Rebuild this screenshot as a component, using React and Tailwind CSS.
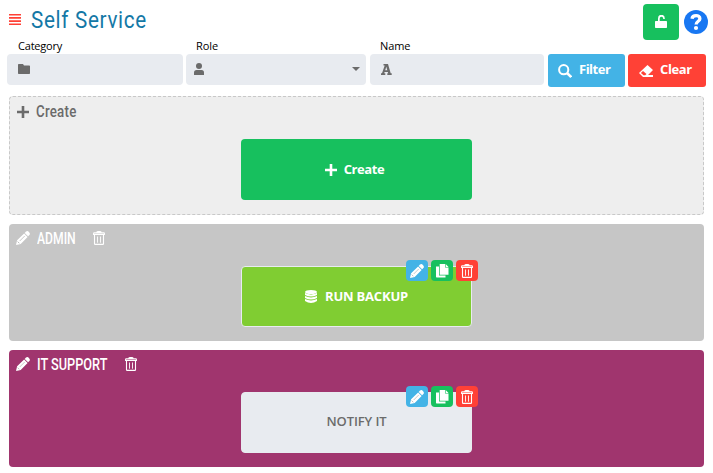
import React from 'react';

function Pencil({ className }) {
  return (
    <svg viewBox="0 0 14 14" className={className}>
      <path fill="currentColor" d="M10 .6Q11.500-.6 12.900 .9 14.600 2.500 13.400 4L12.100 5.300 8.700 1.900ZM8.100 2.400 11.600 5.900 4.700 12.900 0 14 1.100 9.300Z" />
      <path d="M3.700 10 8.800 4.900" fill="none" stroke="#000" strokeOpacity=".28" strokeWidth=".8" />
      <path d="M1.700 10.600 3.400 12.300" fill="none" stroke="#000" strokeOpacity=".3" strokeWidth=".9" />
    </svg>
  );
}

function Trash({ className }) {
  return (
    <svg viewBox="0 0 12 14" className={className} fill="none" stroke="currentColor">
      <path strokeWidth="1.100" d="M.600 3.500V2.500Q.600 1.900 1.200 1.900H10.800Q11.400 1.900 11.400 2.500V3.500ZM3.800 1.800Q3.800.6 4.800.6H7.200Q8.200.6 8.200 1.800M1.500 3.500V12.700Q1.500 13.400 2.200 13.400H9.800Q10.500 13.400 10.500 12.700V3.500" />
      <path strokeWidth=".9" d="M4.500 5.500V11.700M7.500 5.500V11.700" />
    </svg>
  );
}

function Copy({ className }) {
  return (
    <svg viewBox="0 0 13 14" className={className} fill="currentColor">
      <path d="M3.700 0H9.100V3.500H12.500V10.800H3.700ZM9.700 0 12.500 2.900H9.700ZM0 2.500H3V11.500H9.500V13.500H.5L0 13Z" />
    </svg>
  );
}

function Plus({ className }) {
  return (
    <svg viewBox="0 0 12 12" className={className} fill="currentColor">
      <path d="M4.700 0H7.300V4.700H12V7.300H7.300V12H4.700V7.300H0V4.700H4.700Z" />
    </svg>
  );
}

function Actions() {
  return (
    <div className="absolute -top-[7px] -right-[7px] flex gap-[3px] text-white">
      <button className="flex h-[21px] w-[22px] items-center justify-center rounded-[4px] bg-[#43b3e6]"><Pencil className="h-[14px] w-[14px]" /></button>
      <button className="flex h-[21px] w-[22px] items-center justify-center rounded-[4px] bg-[#17c05e]"><Copy className="h-[14px] w-[13px]" /></button>
      <button className="flex h-[21px] w-[22px] items-center justify-center rounded-[4px] bg-[#ff4136]"><Trash className="h-[14px] w-[12px]" /></button>
    </div>
  );
}

function GroupTitle({ children, width, scale }) {
  return (
    <div className="flex h-[28px] items-center pl-[7px] text-white">
      <Pencil className="h-[14px] w-[14px]" />
      <div className={`ml-[7px] ${width}`}>
        <span className={`inline-block origin-left whitespace-nowrap font-['Roboto',sans-serif] text-[16px] font-medium leading-[20px] ${scale}`}>{children}</span>
      </div>
      <Trash className="ml-[18px] h-[14px] w-[12px]" />
    </div>
  );
}

export default function App() {
  return (
    <main className="h-[473px] w-[713px] overflow-hidden bg-white font-['Open_Sans','Noto_Sans',sans-serif]">
      <header className="flex h-[40px] items-start">
        <svg viewBox="0 0 12 11" className="ml-[9px] mt-[14px] h-[11px] w-[12px] shrink-0" fill="#ff4136">
          <path d="M0 0H12V1.500H0ZM0 3.100H12V4.700H0ZM0 6.300H12V7.900H0ZM0 9.500H12V11H0Z" />
        </svg>
        <h1 className="ml-[10px] mt-[5px] w-[120px] origin-left scale-x-[0.86] whitespace-nowrap font-['Roboto',sans-serif] text-[24px] leading-[30px] tracking-[0.8px] text-[#1478a6]">Self Service</h1>
        <button className="ml-auto mt-1 flex h-9 w-9 items-center justify-center rounded-[4px] bg-[#17c05e]">
          <svg viewBox="0 0 12 13" className="mb-px h-[13px] w-[12px]" fill="#fff">
            <path fillRule="evenodd" d="M.7 6H3V3.500A3 3.300 0 0 1 9.800 3.500V4H8.200V3.500A1.700 1.700 0 0 0 4.700 3.500V6H11.300A.7.7 0 0 1 12 6.700V12.300A.7.7 0 0 1 11.300 13H.7A.7.7 0 0 1 0 12.300V6.700A.7.7 0 0 1 .7 6Z" />
          </svg>
        </button>
        <svg viewBox="0 0 24 24" className="ml-[5px] mr-[5px] mt-[10px] h-6 w-6">
          <circle cx="12" cy="12" r="12" fill="#1877f2" />
          <path d="M8 8.700C8.500 4.700 15.900 4.700 15.900 8.700C15.900 11.300 12.100 11.200 12.100 14.600" fill="none" stroke="#fff" strokeWidth="3.300" />
          <circle cx="12" cy="18" r="2.100" fill="#fff" />
        </svg>
      </header>

      <section className="flex pl-[7px] text-[11px] leading-[14px] text-black">
        <div className="w-[176px]">
          <label className="block h-[14px] pl-[11px] leading-[12px] tracking-[-0.2px]">Category</label>
          <div className="flex h-[31px] items-center rounded-[4px] bg-[#e8ebf0] pl-[11px]">
            <svg viewBox="0 0 12 10" className="mb-px h-[10px] w-[12px]" fill="#6b6b6b"><path d="M0 .7Q0 0 .7 0H5L6 1.500H11.300Q12 1.500 12 2.200V9.300Q12 10 11.300 10H.7Q0 10 0 9.300Z" /></svg>
          </div>
        </div>
        <div className="ml-[3px] w-[180px]">
          <label className="block h-[14px] pl-[10px] leading-[12px] tracking-[-0.1px]">Role</label>
          <div className="flex h-[31px] items-center justify-between rounded-[4px] bg-[#e8ebf0] pl-[8px] pr-[6px]">
            <svg viewBox="0 0 10 12" className="mb-px h-[12px] w-[10px]" fill="#6b6b6b"><circle cx="5" cy="3" r="3" /><path d="M0 12V9.500Q0 7 2.500 7H7.500Q10 7 10 9.500V12Z" /></svg>
            <svg viewBox="0 0 8 4" className="mb-px h-1 w-2" fill="#6b6b6b"><path d="M0 0H8L4 4Z" /></svg>
          </div>
        </div>
        <div className="ml-[4px] w-[174px]">
          <label className="block h-[14px] pl-[10px] leading-[12px] tracking-[-0.1px]">Name</label>
          <div className="flex h-[31px] items-center rounded-[4px] bg-[#e8ebf0] pl-[11px]">
            <svg viewBox="0 0 11 11" className="mb-px h-[11px] w-[11px]" fill="#6b6b6b"><path fillRule="evenodd" d="M2.500 0H7L9.700 9.200H10.700V11H6.300V9.200H7.200L6.800 7.900H3.600L3.200 9.200H4.300V11H0V9.200H1L3.700 1.600H2.500ZM5.300 2.700 4.200 6.200H6.300Z" /></svg>
          </div>
        </div>
        <button className="ml-[4px] mt-[14px] flex h-[33px] w-[77px] items-center rounded-[3px] bg-[#43b3e6] pl-[10px] text-[13px] font-bold text-white">
          <svg viewBox="0 0 14 14" className="h-[14px] w-[14px]" fill="none" stroke="#fff" strokeWidth="2"><circle cx="5.700" cy="5.700" r="4.600" /><path strokeWidth="2.500" d="m9 9 4.200 4" /></svg>
          <span className="ml-[7px] mb-[3px] tracking-[-0.5px]">Filter</span>
        </button>
        <button className="ml-[3px] mt-[14px] flex h-[33px] w-[78px] items-center rounded-[3px] bg-[#ff4136] pl-[11px] text-[13px] font-bold text-white">
          <svg viewBox="0 0 14 12" className="h-[12px] w-[14px]" fill="#fff"><path fillRule="evenodd" d="M8.500 0 14 5 9 10H14V12H4L0 8ZM4 6 1.900 8.100 4.500 10.300H6.200L7.500 9Z" /></svg>
          <span className="ml-[7px] mb-[3px] tracking-[-0.4px]">Clear</span>
        </button>
      </section>

      <div className="ml-[9px] mt-[9px] flex w-[695px] flex-col gap-[9px]">
        <section className="h-[119px] rounded-[4px] border border-dashed border-[#c8c8c8] bg-[#eeeeee]">
          <div className="flex h-[29px] items-center pl-[7px] text-[#6b6b6b]">
            <Plus className="h-[12px] w-[12px]" />
            <span className="ml-[7px] inline-block origin-left scale-x-[0.83] font-['Roboto',sans-serif] text-[16px] font-medium leading-[20px] tracking-[0.3px]">Create</span>
          </div>
          <button className="ml-[231px] mt-[13px] flex h-[61px] w-[231px] items-center justify-center rounded-[4px] bg-[#17c05e] text-[13px] font-bold text-white">
            <Plus className="mr-[7px] h-[12px] w-[12px]" /><span className="mr-[4px] tracking-[-0.4px]">Create</span>
          </button>
        </section>

        <section className="h-[117px] rounded-[4px] bg-[#c6c6c6]">
          <GroupTitle width="w-[38px]" scale="scale-x-[0.76]">ADMIN</GroupTitle>
          <div className="relative ml-[232px] mt-[14px] flex h-[61px] w-[231px] items-center justify-center rounded-[4px] border border-[#e8ebf0] bg-[#80cd32] text-[13px] font-bold text-white">
            <svg viewBox="0 0 12 13" className="mr-[8px] h-[13px] w-[12px]" fill="#fff"><ellipse cx="6" cy="2" rx="6" ry="2" /><path d="M0 3Q6 5.900 12 3V5Q6 8 0 5ZM0 6Q6 8.900 12 6V8Q6 11 0 8ZM0 9Q6 11.900 12 9V11Q6 15 0 11Z" /></svg>
            <span className="tracking-[-0.2px]">RUN BACKUP</span>
            <Actions />
          </div>
        </section>

        <section className="h-[117px] rounded-[4px] bg-[#a0356e]">
          <GroupTitle width="w-[70px]" scale="scale-x-[0.795]">IT SUPPORT</GroupTitle>
          <div className="relative ml-[232px] mt-[14px] flex h-[61px] w-[231px] items-center justify-center rounded-[4px] border border-[#e8ebf0] bg-[#e8ebf0] text-[13px] font-medium text-[#6b6b6b]">
            <span className="mb-[2px] font-[550] tracking-[-0.1px]">NOTIFY IT</span>
            <Actions />
          </div>
        </section>
      </div>
    </main>
  );
}
